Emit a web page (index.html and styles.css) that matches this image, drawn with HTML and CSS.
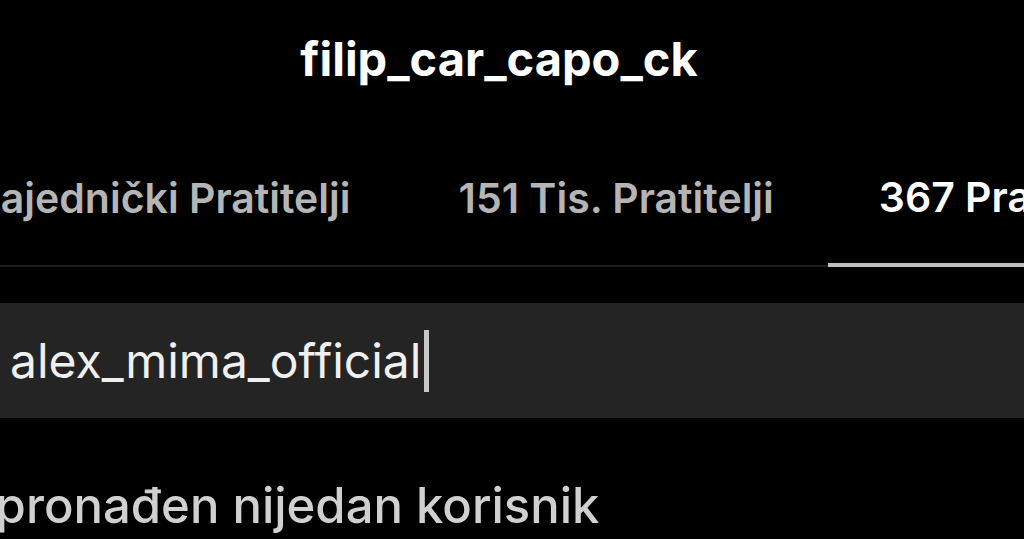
FILE: index.html
```html
<!DOCTYPE html>
<html lang="hr">
<head>
  <meta charset="UTF-8">
  <meta name="viewport" content="width=device-width, initial-scale=1.0">
  <title>filip_car_capo_ck</title>
  <link rel="stylesheet" href="styles.css">
</head>
<body>
  <header class="top">
    <h1 class="username">filip_car_capo_ck</h1>
  </header>

  <!-- Tabovi -->
  <nav class="tabs">
    <div class="tab">Zajednički Pratitelji</div>
    <div class="tab">151 Tis. Pratitelji</div>
    <div class="tab active">367 Praćenja</div>
  </nav>

  <div class="search">
    <span class="search-text">alex_mima_official</span><span class="caret"></span>
  </div>

  <p class="empty">Nije pronađen nijedan korisnik</p>
</body>
</html>
```

FILE: styles.css
```css
body {
  margin: 0;
  background-color: #000;
  color: #fff;
  font-family: Inter, "Noto Sans", sans-serif;
  width: 1024px;
  height: 539px;
  overflow: hidden;
}

.top {
  height: 120px;
  display: flex;
  align-items: center;
  justify-content: center;
  padding-right: 26px;
}

.username {
  margin: 0;
  font-size: 47px;
  font-weight: 700;
  line-height: 1;
  padding-bottom: 4px;
}

/* Tabovi */
.tabs {
  display: flex;
  margin-left: -80px;
  height: 147px;
  padding-top: 10px;
  border-bottom: 2px solid #1e1e1e;
  box-sizing: border-box;
  white-space: nowrap;
}
.tab {
  padding: 0 54px;
  font-size: 41px;
  font-weight: 600;
  color: #b5b5b5;
  display: flex;
  align-items: center;
  box-sizing: border-box;
}
.tab.active {
  color: #fff;
  padding-left: 51px;
  border-bottom: 4px solid #bdbdbd;
  margin-bottom: -2px;
}

.search {
  margin-top: 36px;
  height: 115px;
  background-color: #242424;
  display: flex;
  align-items: center;
  padding-left: 10px;
}
.search-text {
  font-size: 48px;
  color: #f0f0f0;
}
.caret {
  display: inline-block;
  width: 5px;
  height: 62px;
  margin-left: 3px;
  background-color: #c8c8c8;
}

.empty {
  margin: 0;
  margin-left: -108px;
  padding-top: 58px;
  font-size: 49px;
  font-weight: 500;
  color: #d0d0d0;
  white-space: nowrap;
}
```
